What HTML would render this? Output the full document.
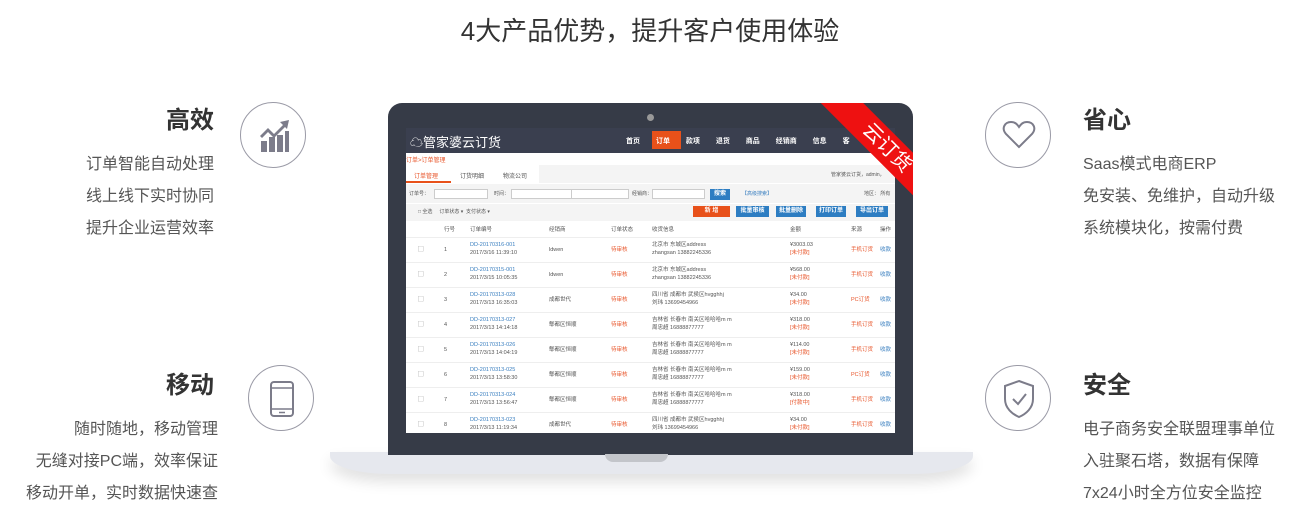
<!DOCTYPE html>
<html><head><meta charset="utf-8"><style>
*{margin:0;padding:0;box-sizing:border-box}
body{width:1295px;height:523px;background:#fff;font-family:"Liberation Sans","Noto Sans CJK SC",sans-serif;position:relative;overflow:hidden;color:#333}
.abs{position:absolute}
.h1{left:0;width:1300px;top:11px;text-align:center;font-size:26px;color:#333}
.t{font-size:24px;font-weight:bold;color:#333}
.d{font-size:16px;color:#555;line-height:32px}
.r{text-align:right}
.c{width:66px;height:66px;border:1.5px solid #9a9aa6;border-radius:50%}
.s{font-size:7px;color:#555;white-space:nowrap}
.row{position:absolute;left:0;width:489px;height:25px;border-bottom:1px solid #eee;background:#fff}
.row span{position:absolute;font-size:5.5px;line-height:7px;white-space:nowrap;color:#555}
.blue{color:#3a7fc0!important}.red{color:#e8552a!important}
.btn{position:absolute;height:11px;font-size:6px;color:#fff;text-align:center;line-height:11px;font-weight:bold}
</style></head><body>
<div class="abs h1">4大产品优势，提升客户使用体验</div>

<div class="abs t r" style="left:100px;width:114px;top:100px">高效</div>
<div class="abs d r" style="left:40px;width:174px;top:149px">订单智能自动处理<br>线上线下实时协同<br>提升企业运营效率</div>
<div class="abs c" style="left:240px;top:102px"></div>
<svg class="abs" style="left:258px;top:116px" width="32" height="36" viewBox="0 0 32 36"><g fill="#7c7c8a"><path d="M2 20 L10 12 L16 18 L25 9 L22 6 L31 4 L29 13 L27 11 L16 22 L10 16 L4 22Z"/><rect x="3" y="25" width="6" height="11"/><rect x="11" y="21" width="6" height="15"/><rect x="19" y="19" width="6" height="17"/><rect x="27" y="15" width="4" height="21"/></g></svg>

<div class="abs t r" style="left:100px;width:114px;top:365px">移动</div>
<div class="abs d r" style="left:20px;width:198px;top:414px">随时随地，移动管理<br>无缝对接PC端，效率保证<br>移动开单，实时数据快速查</div>
<div class="abs c" style="left:248px;top:365px"></div>
<svg class="abs" style="left:268px;top:381px" width="28" height="36" viewBox="0 0 28 36"><rect x="3" y="1" width="22" height="34" rx="3" fill="none" stroke="#7c7c8a" stroke-width="2"/><line x1="3" y1="7" x2="25" y2="7" stroke="#7c7c8a" stroke-width="1.5"/><line x1="3" y1="28" x2="25" y2="28" stroke="#7c7c8a" stroke-width="1.5"/><line x1="11" y1="31.5" x2="17" y2="31.5" stroke="#7c7c8a" stroke-width="1.5"/></svg>

<div class="abs t" style="left:1083px;top:100px">省心</div>
<div class="abs d" style="left:1083px;top:149px">Saas模式电商ERP<br>免安装、免维护，自动升级<br>系统模块化，按需付费</div>
<div class="abs c" style="left:985px;top:102px"></div>
<svg class="abs" style="left:1002px;top:120px" width="34" height="30" viewBox="0 0 34 30"><path d="M17 27 L4 14 C-1 8 3 2 9 2 C13 2 15 4 17 7 C19 4 21 2 25 2 C31 2 35 8 30 14Z" fill="none" stroke="#7c7c8a" stroke-width="2"/></svg>

<div class="abs t" style="left:1083px;top:365px">安全</div>
<div class="abs d" style="left:1083px;top:414px">电子商务安全联盟理事单位<br>入驻聚石塔，数据有保障<br>7x24小时全方位安全监控</div>
<div class="abs c" style="left:985px;top:365px"></div>
<svg class="abs" style="left:1002px;top:379px" width="34" height="40" viewBox="0 0 34 40"><path d="M17 2 L31 7 V20 C31 29 24 35 17 38 C10 35 3 29 3 20 V7Z" fill="none" stroke="#7c7c8a" stroke-width="2"/><path d="M11 20 L16 25 L24 15" fill="none" stroke="#7c7c8a" stroke-width="2"/></svg>

<!-- laptop -->
<div class="abs" style="left:330px;top:452px;width:643px;height:22px;background:#e6e8ee;border-radius:0 0 60px 60px/0 0 18px 18px;box-shadow:0 8px 14px rgba(0,0,0,.12)"></div>
<div class="abs" style="left:388px;top:103px;width:525px;height:352px;background:#363b47;border-radius:14px 14px 0 0"></div>
<div class="abs" style="left:605px;top:454px;width:63px;height:8px;background:#c3c5ca;border-radius:0 0 8px 8px"></div>
<div class="abs" style="left:647px;top:114px;width:7px;height:7px;background:#999;border-radius:50%"></div>

<div class="abs" style="left:406px;top:128px;width:489px;height:305px;background:#fff;overflow:hidden">
 <div class="abs" style="left:0;top:0;width:489px;height:25px;background:#3a3f4f"></div>
 <div class="abs" style="left:4px;top:4px;font-size:13px;color:#fff">☁管家婆云订货</div>
 <div class="abs" style="left:246px;top:3px;width:29px;height:18px;background:#e8511a"></div>
 <div class="abs s" style="left:220px;top:8px;color:#fff;font-size:7px;font-weight:bold;word-spacing:14px">首页 订单 款项 退货 商品 经销商 信息 客</div>
 <div class="abs s red" style="left:0;top:27px;font-size:6px">订单&gt;订单管理</div>
 <div class="abs" style="left:0;top:37px;width:489px;height:18px;background:#f4f4f4"></div>
 <div class="abs" style="left:0;top:37px;width:133px;height:18px;background:#fff"></div>
 <div class="abs" style="left:0;top:53px;width:45px;height:2px;background:#e8511a"></div>
 <div class="abs s red" style="left:8px;top:43px;font-size:6px">订单管理</div>
 <div class="abs s" style="left:54px;top:43px;font-size:6px">订货明细</div>
 <div class="abs s" style="left:97px;top:43px;font-size:6px">物流公司</div>
 <div class="abs s" style="left:425px;top:43px;font-size:5px">管家婆云订货，admin，</div>
 <div class="abs" style="left:0;top:56px;width:489px;height:19px;background:#f4f4f4"></div>
 <div class="abs" style="left:28px;top:61px;width:54px;height:10px;background:#fff;border:1px solid #ccc"></div>
 <div class="abs" style="left:105px;top:61px;width:62px;height:10px;background:#fff;border:1px solid #ccc"></div>
 <div class="abs" style="left:165px;top:61px;width:58px;height:10px;background:#fff;border:1px solid #ccc"></div>
 <div class="abs" style="left:246px;top:61px;width:53px;height:10px;background:#fff;border:1px solid #ccc"></div>
 <div class="btn" style="left:304px;top:61px;width:20px;background:#2d7dc2">搜索</div>
 <div class="abs s" style="left:3px;top:62px;font-size:5px">订单号：</div>
 <div class="abs s" style="left:88px;top:62px;font-size:5px">时间：</div>
 <div class="abs s" style="left:226px;top:62px;font-size:5px">经销商：</div>
 <div class="abs s blue" style="left:336px;top:62px;font-size:5px">【高级搜索】</div>
 <div class="abs s" style="left:458px;top:62px;font-size:5px">地区： 所有</div>
 <div class="abs" style="left:0;top:76px;width:489px;height:17px;background:#f4f4f4"></div>
 <div class="abs s" style="left:12px;top:80px;font-size:5px">□ 全选 &nbsp; &nbsp; 订单状态 ▾ &nbsp;支付状态 ▾</div>
 <div class="btn" style="left:287px;top:78px;width:37px;background:#e8511a">新 增</div>
 <div class="btn" style="left:330px;top:78px;width:33px;background:#2d7dc2">批量审核</div>
 <div class="btn" style="left:370px;top:78px;width:30px;background:#2d7dc2">批量删除</div>
 <div class="btn" style="left:410px;top:78px;width:30px;background:#2d7dc2">打印订单</div>
 <div class="btn" style="left:450px;top:78px;width:32px;background:#2d7dc2">导出订单</div>
 <div class="row" style="top:94px;height:16px"><span style="left:38px;top:5px">行号</span><span style="left:64px;top:5px">订单编号</span><span style="left:143px;top:5px">经销商</span><span style="left:205px;top:5px">订单状态</span><span style="left:246px;top:5px">收货信息</span><span style="left:384px;top:5px">金额</span><span style="left:445px;top:5px">来源</span><span style="left:474px;top:5px">操作</span></div>
 <div class="row" style="top:110px"><span style="left:12px;top:9px">▢</span><span style="left:38px;top:9px">1</span><span class="blue" style="left:64px;top:4px">DD-20170316-001</span><span style="left:64px;top:12px">2017/3/16 11:39:10</span><span style="left:143px;top:9px">ldwen</span><span class="red" style="left:205px;top:9px">待审核</span><span style="left:246px;top:4px">北京市 东城区address</span><span style="left:246px;top:12px">zhangsan 13882245336</span><span style="left:384px;top:4px">¥3003.03</span><span class="red" style="left:384px;top:12px">[未付款]</span><span class="red" style="left:445px;top:9px">手机订货</span><span class="blue" style="left:474px;top:9px">收款</span></div>
 <div class="row" style="top:135px"><span style="left:12px;top:9px">▢</span><span style="left:38px;top:9px">2</span><span class="blue" style="left:64px;top:4px">DD-20170315-001</span><span style="left:64px;top:12px">2017/3/15 10:05:35</span><span style="left:143px;top:9px">ldwen</span><span class="red" style="left:205px;top:9px">待审核</span><span style="left:246px;top:4px">北京市 东城区address</span><span style="left:246px;top:12px">zhangsan 13882245336</span><span style="left:384px;top:4px">¥568.00</span><span class="red" style="left:384px;top:12px">[未付款]</span><span class="red" style="left:445px;top:9px">手机订货</span><span class="blue" style="left:474px;top:9px">收款</span></div>
 <div class="row" style="top:160px"><span style="left:12px;top:9px">▢</span><span style="left:38px;top:9px">3</span><span class="blue" style="left:64px;top:4px">DD-20170313-028</span><span style="left:64px;top:12px">2017/3/13 16:35:03</span><span style="left:143px;top:9px">成都世代</span><span class="red" style="left:205px;top:9px">待审核</span><span style="left:246px;top:4px">四川省 成都市 武侯区hvgghhj</span><span style="left:246px;top:12px">刘玮 13699454966</span><span style="left:384px;top:4px">¥34.00</span><span class="red" style="left:384px;top:12px">[未付款]</span><span class="red" style="left:445px;top:9px">PC订货</span><span class="blue" style="left:474px;top:9px">收款</span></div>
 <div class="row" style="top:185px"><span style="left:12px;top:9px">▢</span><span style="left:38px;top:9px">4</span><span class="blue" style="left:64px;top:4px">DD-20170313-027</span><span style="left:64px;top:12px">2017/3/13 14:14:18</span><span style="left:143px;top:9px">郫都区恒顺</span><span class="red" style="left:205px;top:9px">待审核</span><span style="left:246px;top:4px">吉林省 长春市 南关区哈哈哈m m</span><span style="left:246px;top:12px">周忠超 16888877777</span><span style="left:384px;top:4px">¥318.00</span><span class="red" style="left:384px;top:12px">[未付款]</span><span class="red" style="left:445px;top:9px">手机订货</span><span class="blue" style="left:474px;top:9px">收款</span></div>
 <div class="row" style="top:210px"><span style="left:12px;top:9px">▢</span><span style="left:38px;top:9px">5</span><span class="blue" style="left:64px;top:4px">DD-20170313-026</span><span style="left:64px;top:12px">2017/3/13 14:04:19</span><span style="left:143px;top:9px">郫都区恒顺</span><span class="red" style="left:205px;top:9px">待审核</span><span style="left:246px;top:4px">吉林省 长春市 南关区哈哈哈m m</span><span style="left:246px;top:12px">周忠超 16888877777</span><span style="left:384px;top:4px">¥114.00</span><span class="red" style="left:384px;top:12px">[未付款]</span><span class="red" style="left:445px;top:9px">手机订货</span><span class="blue" style="left:474px;top:9px">收款</span></div>
 <div class="row" style="top:235px"><span style="left:12px;top:9px">▢</span><span style="left:38px;top:9px">6</span><span class="blue" style="left:64px;top:4px">DD-20170313-025</span><span style="left:64px;top:12px">2017/3/13 13:58:30</span><span style="left:143px;top:9px">郫都区恒顺</span><span class="red" style="left:205px;top:9px">待审核</span><span style="left:246px;top:4px">吉林省 长春市 南关区哈哈哈m m</span><span style="left:246px;top:12px">周忠超 16888877777</span><span style="left:384px;top:4px">¥159.00</span><span class="red" style="left:384px;top:12px">[未付款]</span><span class="red" style="left:445px;top:9px">PC订货</span><span class="blue" style="left:474px;top:9px">收款</span></div>
 <div class="row" style="top:260px"><span style="left:12px;top:9px">▢</span><span style="left:38px;top:9px">7</span><span class="blue" style="left:64px;top:4px">DD-20170313-024</span><span style="left:64px;top:12px">2017/3/13 13:56:47</span><span style="left:143px;top:9px">郫都区恒顺</span><span class="red" style="left:205px;top:9px">待审核</span><span style="left:246px;top:4px">吉林省 长春市 南关区哈哈哈m m</span><span style="left:246px;top:12px">周忠超 16888877777</span><span style="left:384px;top:4px">¥318.00</span><span class="red" style="left:384px;top:12px">[付款中]</span><span class="red" style="left:445px;top:9px">手机订货</span><span class="blue" style="left:474px;top:9px">收款</span></div>
 <div class="row" style="top:285px"><span style="left:12px;top:9px">▢</span><span style="left:38px;top:9px">8</span><span class="blue" style="left:64px;top:4px">DD-20170313-023</span><span style="left:64px;top:12px">2017/3/13 11:19:34</span><span style="left:143px;top:9px">成都世代</span><span class="red" style="left:205px;top:9px">待审核</span><span style="left:246px;top:4px">四川省 成都市 武侯区hvgghhj</span><span style="left:246px;top:12px">刘玮 13699454966</span><span style="left:384px;top:4px">¥34.00</span><span class="red" style="left:384px;top:12px">[未付款]</span><span class="red" style="left:445px;top:9px">手机订货</span><span class="blue" style="left:474px;top:9px">收款</span></div>
</div>

<!-- ribbon -->
<div class="abs" style="left:813px;top:103px;width:100px;height:100px;overflow:hidden">
 <div class="abs" style="width:160px;height:30px;background:#ee1111;transform:rotate(45deg);transform-origin:50% 50%;color:#fff;font-size:20px;text-align:center;line-height:30px;left:-6px;top:30px">云订货</div>
</div>
</body></html>
